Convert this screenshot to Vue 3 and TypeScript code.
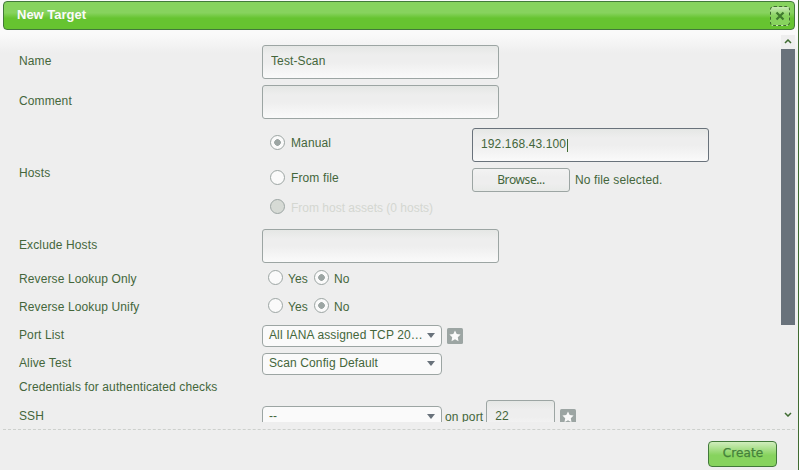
<script setup lang="ts">
import { ref } from 'vue'

const name = ref('Test-Scan')
const comment = ref('')
const exclude = ref('')
const port = ref('22')
const hostMode = ref('manual')
const lookups = ref([
  { label: 'Reverse Lookup Only', value: 'No' },
  { label: 'Reverse Lookup Unify', value: 'No' },
])
const choices: string[] = ['Yes', 'No']
const star = 'M8 2.6 9.7 6.1 13.6 6.6 10.8 9.3 11.5 13.2 8 11.3 4.5 13.2 5.2 9.3 2.4 6.6 6.3 6.1Z'
</script>

<template>
  <div class="dialog">
    <header class="titlebar">
      <h1>New Target</h1>
      <button class="close" aria-label="Close">
        <svg width="10" height="10" viewBox="0 0 10 10"><path d="M1.5 1.5 8.5 8.5M8.5 1.5 1.5 8.5" /></svg>
      </button>
    </header>

    <main class="content">
      <form class="form">
        <div class="row"><span class="label">Name</span><input v-model="name" class="field" type="text" /></div>
        <div class="row"><span class="label">Comment</span><input v-model="comment" class="field" type="text" /></div>
        <div class="row hosts">
          <span class="label">Hosts</span>
          <div class="host-options">
            <div class="option manual">
              <label><i class="radio" :class="{ on: hostMode === 'manual' }" @click="hostMode = 'manual'" />Manual</label>
              <div class="field focused"><span>192.168.43.100</span><i class="caret" /></div>
            </div>
            <div class="option file">
              <label><i class="radio" :class="{ on: hostMode === 'file' }" @click="hostMode = 'file'" />From file</label>
              <button type="button" class="browse">Browse...</button>
              <span class="file-name">No file selected.</span>
            </div>
            <div class="option disabled">
              <label><i class="radio" />From host assets (0 hosts)</label>
            </div>
          </div>
        </div>
        <div class="row"><span class="label">Exclude Hosts</span><input v-model="exclude" class="field" type="text" /></div>
        <div v-for="item in lookups" :key="item.label" class="row short lookup">
          <span class="label">{{ item.label }}</span>
          <div class="choices">
            <label v-for="c in choices" :key="c"><i class="radio" :class="{ on: item.value === c }" @click="item.value = c" />{{ c }}</label>
          </div>
        </div>
        <div class="row short ports">
          <span class="label">Port List</span>
          <div class="select"><span>All IANA assigned TCP 20…</span><i class="arrow" /></div>
          <svg class="star" viewBox="0 0 16 16"><rect width="16" height="16" rx="1.5" /><path :d="star" /></svg>
        </div>
        <div class="row short">
          <span class="label">Alive Test</span>
          <div class="select"><span>Scan Config Default</span><i class="arrow" /></div>
        </div>
        <div class="row heading"><span>Credentials for authenticated checks</span></div>
        <div class="row ssh">
          <span class="label">SSH</span>
          <div class="select"><span>--</span><i class="arrow" /></div>
          <span class="on-port">on port</span>
          <input v-model="port" class="field port" type="text" />
          <svg class="star" viewBox="0 0 16 16"><rect width="16" height="16" rx="1.5" /><path :d="star" /></svg>
        </div>
      </form>
      <div class="scrollbar">
        <svg width="8" height="5" viewBox="0 0 8 5"><path d="M1 4 4 1 7 4" /></svg>
        <div class="thumb" />
        <svg class="down" width="8" height="5" viewBox="0 0 8 5"><path d="M1 1 4 4 7 1" /></svg>
      </div>
    </main>
    <footer class="footer"><button class="create">Create</button></footer>
  </div>
</template>

<style>
body { margin: 0; background: #eee; }
</style>

<style scoped>
* { box-sizing: border-box; }
.dialog {
  display: flex; flex-direction: column; width: 799px; height: 470px; overflow: hidden;
  padding: 1px 1px 0 3px; border-right: 1px solid #3f6b31;
  background: linear-gradient(#fafafa 0, #fafafa 34px, #eee 53px);
  color: #44663b; font: 12px/16px "Liberation Sans", Arial, sans-serif; letter-spacing: 0.12px;
}
button, input { font: inherit; color: inherit; letter-spacing: inherit; }
.titlebar {
  flex: none; display: flex; align-items: center; justify-content: space-between;
  width: 792px; height: 29px; padding: 0 4px 0 13px; border: 1px solid #42793a; border-radius: 4px;
  background: linear-gradient(#87d35e 0, #87d35e 40%, #66c430 60%);
}
h1 { margin: 0 0 2px; color: #fafafa; font-size: 13px; line-height: 16px; letter-spacing: 0; }
.close {
  display: grid; place-items: center; width: 20px; height: 20px; padding: 0; margin-top: 1px;
  border: 1px dashed #3f6b31; border-radius: 4px; background: linear-gradient(#c8e8b6, #87d35e 50%);
}
.close path { stroke: #3f7a2e; stroke-width: 2.2; fill: none; }
.content { flex: none; display: flex; justify-content: space-between; width: 792px; height: 392px; overflow: hidden; }
.form { width: 770px; padding: 12px 0 0 16px; }
.row { display: flex; align-items: center; height: 40px; white-space: nowrap; }
.label { flex: none; width: 243px; padding-bottom: 2px; }
.field {
  display: block; width: 237px; height: 34px; padding: 0 8px 2px; border: 1px solid #9ca5a3; border-radius: 3px; outline: 0;
  background: linear-gradient(#e5e7e5 0, #eee 9px, #eee 50%, #fafafa);
}
.field.focused { display: flex; align-items: center; border-color: #69727b; }
.caret { width: 1px; height: 13px; margin: 2px 0 0 1px; background: #3f6b31; }
.hosts { height: 104px; }
.hosts > .label { padding-bottom: 2px; }
.host-options { align-self: flex-start; padding-top: 6px; }
.option { display: flex; align-items: center; height: 36px; padding-left: 8px; }
.option label { display: flex; align-items: center; gap: 6px; width: 202px; }
.option .radio { margin-top: -1px; }
.manual { height: 40px; align-items: flex-start; }
.manual label { height: 34px; padding-bottom: 4px; }
.file { height: 24px; }
.file label { padding-bottom: 4px; }
.file-name { padding-left: 5px; }
.browse {
  width: 98px; height: 24px; padding: 0; border: 1px solid #9ca5a3; border-radius: 3px;
  background: linear-gradient(#f3f3f3, #eee 35%, #eee 65%, #e8eae8);
  font: 12px/16px "Noto Sans", sans-serif; letter-spacing: -0.4px;
}
.disabled { height: 32px; color: #d4d7d1; letter-spacing: 0; }
.option.disabled .radio { margin-top: -4px; background: #d6dad5; }
.radio { flex: none; width: 15px; height: 15px; border: 1px solid #9ca5a3; border-radius: 50%; background: #fafafa; }
.radio.on { background: radial-gradient(circle, #9ca5a3 0, #9ca5a3 3px, #fafafa 3.6px); }
.short { height: 28px; }
.short .label { padding-bottom: 2px; }
.lookup { padding-bottom: 2px; }
.lookup .label { padding-bottom: 1px; }
.choices { display: flex; gap: 6px; padding: 0 0 0 6px; }
.choices label { display: flex; gap: 5px; }
.choices .radio { margin-top: -1px; }
.select {
  flex: none; display: flex; align-items: center; justify-content: space-between; width: 180px; height: 22px;
  padding: 0 6px 2px; border: 1px solid #9ca5a3; border-radius: 4px; background: #fafafa;
}
.arrow { margin-top: 1px; border: 4px solid transparent; border-top: 5px solid #69727b; border-bottom: 0; }
.star { width: 16px; height: 16px; margin-left: 5px; }
.star rect { fill: #9ca5a3; }
.star path { fill: #fafafa; }
.heading { height: 20px; margin-top: -1px; }
.on-port { padding: 0 3px 0; }
.port { width: 69px; }
.scrollbar { display: flex; flex-direction: column; align-items: center; width: 14px; margin-top: 5px; padding-top: 4px; background: #eee; }
.scrollbar svg { flex: none; fill: none; stroke: #3f6b31; stroke-width: 1.5; }
.thumb { flex: none; width: 14px; height: 276px; margin-top: 5px; background: #69727b; }
.scrollbar .down { margin-top: 87px; }
.footer { display: flex; justify-content: flex-end; width: 792px; height: 41px; margin-top: 7px; padding: 11px 18px 0 0; border-top: 1px dashed #cdd0cd; }
.create {
  width: 69px; height: 26px; padding: 0 0 2px 1px; border: 1px solid #42793a; border-radius: 4px;
  background: linear-gradient(#d0edbd, #87d35e 55%); color: #44813a; font: 12px/16px "DejaVu Sans", sans-serif;
  -webkit-text-stroke: 0.25px #44813a;
}
</style>
